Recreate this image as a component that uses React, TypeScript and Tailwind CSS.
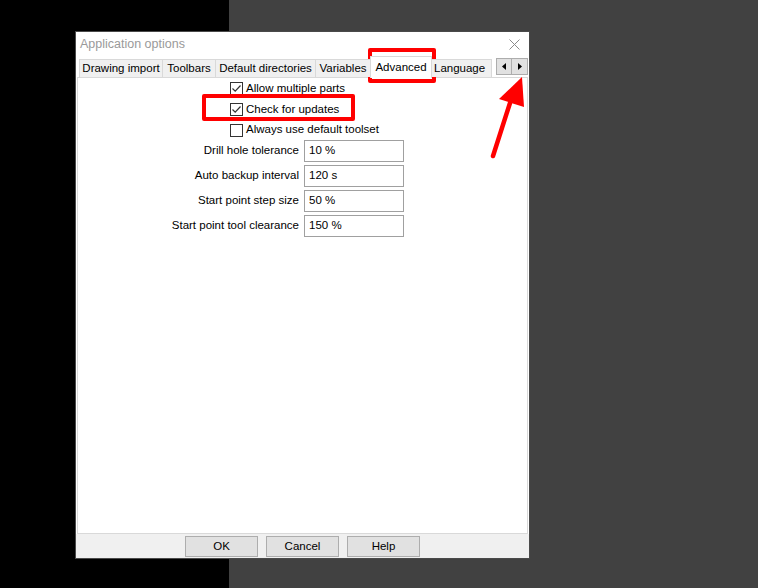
import React from "react";

const font = { fontFamily: '"Liberation Sans", Arial, sans-serif' };

function Check({ checked, label, h }: { checked: boolean; label: string; h: string }) {
  return (
    <div className={`flex ${h} items-center pl-[152px]`}>
      <span className="flex h-[13px] w-[13px] items-center justify-center border border-[#333] bg-white">
        {checked && (
          <svg width="11" height="11" viewBox="0 0 11 11">
            <path d="M1.5 5.5 L4.2 8.2 L9.5 2.5" fill="none" stroke="#333" strokeWidth="1.2" />
          </svg>
        )}
      </span>
      <span className="ml-[3px] text-[11.5px] text-black">{label}</span>
    </div>
  );
}

function Field({ label, value }: { label: string; value: string }) {
  return (
    <div className="flex h-[25px] items-center">
      <span className="w-[226px] pr-[5px] text-right text-[11.5px] text-black">{label}</span>
      <span className="flex h-[22px] w-[100px] items-center border border-[#a0a0a0] bg-white pl-[4px] text-[11.5px] text-black">
        {value}
      </span>
    </div>
  );
}

const tabs = [
  { name: "Drawing import", w: "w-[83px]" },
  { name: "Toolbars", w: "w-[53px]" },
  { name: "Default directories", w: "w-[100px]" },
  { name: "Variables", w: "w-[55px]" },
];

export default function App() {
  return (
    <div className="relative flex h-[588px] w-[758px] overflow-hidden" style={font}>
      <div className="w-[229px] bg-black" />
      <div className="flex-1 bg-[#414141]" />

      {/* dialog window */}
      <div className="absolute left-[75px] top-[31px] flex h-[528px] w-[455px] flex-col border border-[#4a4a4a] bg-[#f0f0f0]">
        <div className="flex h-[24px] items-center justify-between bg-white pl-[4px] pr-[9px]">
          <span className="text-[12.5px] text-[#9a9a9a]">Application options</span>
          <svg width="11" height="11" viewBox="0 0 11 11">
            <path d="M0.5 0.5 L10.5 10.5 M10.5 0.5 L0.5 10.5" stroke="#8a8a8a" strokeWidth="1" />
          </svg>
        </div>
        <div className="flex flex-1 flex-col bg-white px-[1px] pt-[1px]">
          {/* tab strip */}
          <div className="relative z-10 flex h-[20px] items-end">
            <div className="ml-[2px] flex h-[18px] items-stretch">
              {tabs.map((t) => (
                <div
                  key={t.name}
                  className={`${t.w} flex items-center justify-center border border-r-0 border-b-0 border-[#d9d9d9] bg-[#f0f0f0] text-[11.5px] text-black`}
                >
                  {t.name}
                </div>
              ))}
            </div>
            <div className="-mb-[1px] flex h-[22px] w-[62px] items-start justify-center border border-b-0 border-[#d9d9d9] bg-white pt-[2px] text-[11.5px] text-black">
              Advanced
            </div>
            <div className="flex h-[18px] w-[60px] items-center overflow-hidden border border-l-0 border-b-0 border-[#d9d9d9] bg-[#f0f0f0] pl-[2px] text-[11.5px] text-black">
              Language
            </div>
            <div className="mb-[2px] ml-[4px] flex h-[17px] self-end">
              <span className="flex w-[16px] items-center justify-center border border-[#adadad] bg-[#e1e1e1]">
                <svg width="4" height="7" viewBox="0 0 4 7"><path d="M4 0 L0 3.5 L4 7Z" fill="#000" /></svg>
              </span>
              <span className="flex w-[16px] items-center justify-center border border-l-0 border-[#adadad] bg-[#e1e1e1]">
                <svg width="4" height="7" viewBox="0 0 4 7"><path d="M0 0 L4 3.5 L0 7Z" fill="#000" /></svg>
              </span>
            </div>
          </div>
          {/* tab panel */}
          <div className="flex flex-1 flex-col border border-[#d9d9d9] bg-white">
            <Check checked label="Allow multiple parts" h="h-[21px]" />
            <Check checked label="Check for updates" h="h-[21px]" />
            <Check checked={false} label="Always use default toolset" h="h-[20px]" />
            <div className="-mt-[2px] flex flex-col">
              <Field label="Drill hole tolerance" value="10 %" />
              <Field label="Auto backup interval" value="120 s" />
              <Field label="Start point step size" value="50 %" />
              <Field label="Start point tool clearance" value="150 %" />
            </div>
          </div>
        </div>
        <div className="flex h-[24px] items-start gap-[8px] bg-[#f0f0f0] pl-[109px] pt-[2px]">
          {["OK", "Cancel", "Help"].map((b) => (
            <div
              key={b}
              className="flex h-[21px] w-[73px] items-center justify-center border border-[#adadad] bg-[#e1e1e1] text-[11.5px] text-black"
            >
              {b}
            </div>
          ))}
        </div>
      </div>

      {/* annotations */}
      <div className="absolute left-[368px] top-[48px] h-[35px] w-[68px] rounded-[2px] border-[4px] border-[#ff0000]" />
      <div className="absolute left-[202px] top-[94px] h-[27px] w-[153px] rounded-[2px] border-[4px] border-[#ff0000]" />
      <svg className="absolute left-0 top-0" width="758" height="588" viewBox="0 0 758 588">
        <path d="M493 156 L510 103" stroke="#ff0000" strokeWidth="4.5" strokeLinecap="round" />
        <path d="M522 77 L499 99 L524 107 Z" fill="#ff0000" />
      </svg>
    </div>
  );
}
